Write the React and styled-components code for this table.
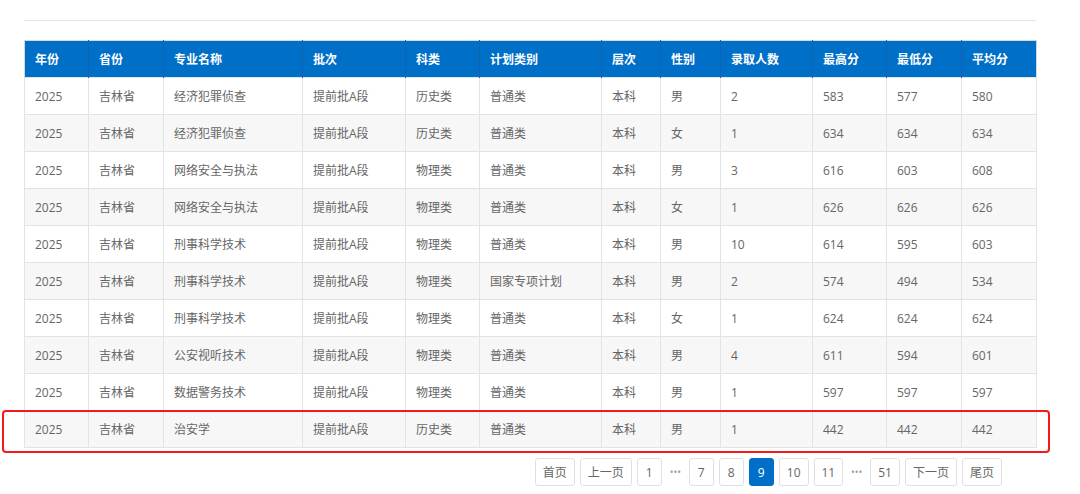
import React from 'react'
import styled, { createGlobalStyle } from 'styled-components'

const GlobalStyle = createGlobalStyle`
  body {
    margin: 0;
    background: #fff;
    font-family: "Open Sans", "Noto Sans CJK SC", sans-serif;
  }
`

const Page = styled.div`
  width: 1012px;
  padding: 20px 0 0 24px;
`

const Divider = styled.div`
  height: 1px;
  background: #e6e6e6;
  margin-bottom: 19px;
`

const TableWrap = styled.div`
  position: relative;
`

const Table = styled.table`
  width: 1012px;
  table-layout: fixed;
  border-collapse: collapse;
  font-size: 12px;
`

const HeadCell = styled.th`
  height: 36px;
  padding: 0 10px;
  background: #006fc8;
  color: #fff;
  font-weight: 700;
  text-align: left;
  border-top: 1px solid #d4d9df;
  border-left: 1px solid #1462ad;
  border-right: 1px solid #1462ad;
  &:first-child {
    border-left: 1px solid #d4d9df;
  }
  &:last-child {
    border-right: 1px solid #d4d9df;
  }
`

const Row = styled.tr`
  background: ${p => (p.$striped ? '#f7f7f7' : '#fff')};
`

const Cell = styled.td`
  height: 36px;
  padding: 0 10px;
  color: #666;
  border: 1px solid #e3e3e3;
  white-space: nowrap;
`

const Highlight = styled.div`
  position: absolute;
  left: -22px;
  top: 370px;
  width: 1048px;
  height: 43px;
  box-sizing: border-box;
  border: 2px solid #f51a1a;
  border-radius: 4px;
  pointer-events: none;
`

const Pager = styled.div`
  display: flex;
  justify-content: flex-end;
  align-items: center;
  gap: 5px;
  margin-top: 10px;
  padding-right: 34px;
  font-size: 12px;
`

const PageBtn = styled.span`
  box-sizing: border-box;
  height: 28px;
  min-width: 25px;
  padding: 0 7px;
  display: flex;
  align-items: center;
  justify-content: center;
  border: 1px solid ${p => (p.$active ? '#006fc8' : '#e0e0e0')};
  border-radius: 3px;
  background: ${p => (p.$active ? '#006fc8' : '#fff')};
  color: ${p => (p.$active ? '#fff' : '#666')};
`

const Dots = styled.span`
  width: 17px;
  text-align: center;
  color: #999;
  font-size: 10px;
`

const cols = [64, 75, 139, 103, 74, 122, 59, 60, 92, 74, 75, 75]
const heads = ['年份', '省份', '专业名称', '批次', '科类', '计划类别', '层次', '性别', '录取人数', '最高分', '最低分', '平均分']

const rows = [
  ['经济犯罪侦查', '历史类', '普通类', '男', '2', '583', '577', '580'],
  ['经济犯罪侦查', '历史类', '普通类', '女', '1', '634', '634', '634'],
  ['网络安全与执法', '物理类', '普通类', '男', '3', '616', '603', '608'],
  ['网络安全与执法', '物理类', '普通类', '女', '1', '626', '626', '626'],
  ['刑事科学技术', '物理类', '普通类', '男', '10', '614', '595', '603'],
  ['刑事科学技术', '物理类', '国家专项计划', '男', '2', '574', '494', '534'],
  ['刑事科学技术', '物理类', '普通类', '女', '1', '624', '624', '624'],
  ['公安视听技术', '物理类', '普通类', '男', '4', '611', '594', '601'],
  ['数据警务技术', '物理类', '普通类', '男', '1', '597', '597', '597'],
  ['治安学', '历史类', '普通类', '男', '1', '442', '442', '442']
]

const pages = ['首页', '上一页', '1', '…', '7', '8', '9', '10', '11', '…', '51', '下一页', '尾页']

export default function App() {
  return (
    <Page>
      <GlobalStyle />
      <Divider />
      <TableWrap>
        <Table>
          <colgroup>
            {cols.map((w, i) => (
              <col key={i} style={{ width: w }} />
            ))}
          </colgroup>
          <thead>
            <tr>
              {heads.map(h => (
                <HeadCell key={h}>{h}</HeadCell>
              ))}
            </tr>
          </thead>
          <tbody>
            {rows.map((r, i) => {
              const [major, kind, plan, sex, num, hi, lo, avg] = r
              const cells = ['2025', '吉林省', major, '提前批A段', kind, plan, '本科', sex, num, hi, lo, avg]
              return (
                <Row key={i} $striped={i % 2 === 1}>
                  {cells.map((c, j) => (
                    <Cell key={j}>{c}</Cell>
                  ))}
                </Row>
              )
            })}
          </tbody>
        </Table>
        <Highlight />
      </TableWrap>
      <Pager>
        {pages.map((p, i) =>
          p === '…' ? (
            <Dots key={i}>•••</Dots>
          ) : (
            <PageBtn key={i} $active={p === '9'}>
              {p}
            </PageBtn>
          )
        )}
      </Pager>
    </Page>
  )
}
